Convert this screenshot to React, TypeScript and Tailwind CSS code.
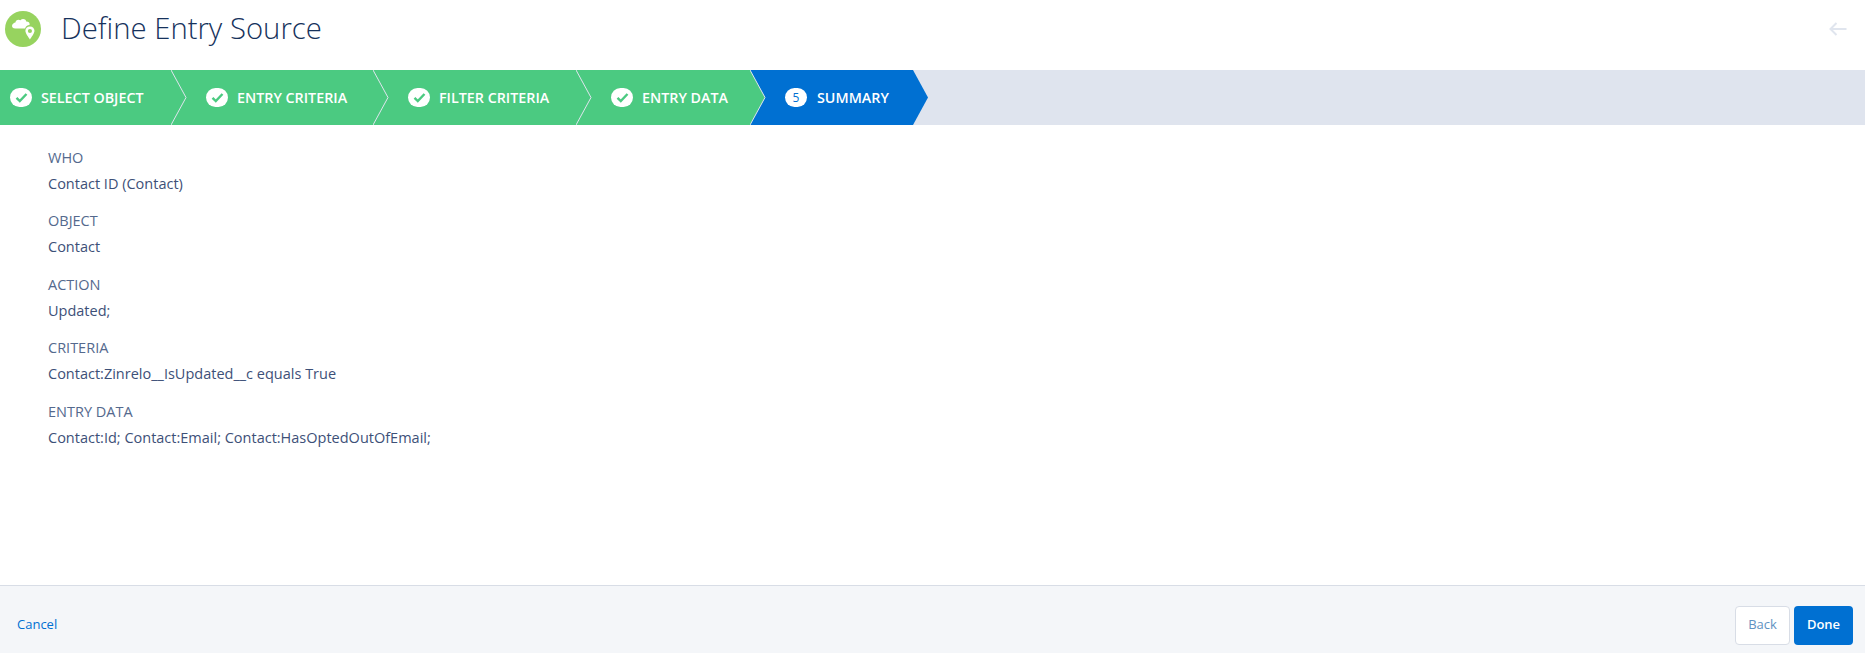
const font = '[font-family:"Open_Sans","Noto_Sans",sans-serif]';

const steps = [
  { label: 'SELECT OBJECT', width: 'w-[171px]', pad: 'pl-[10px]' },
  { label: 'ENTRY CRITERIA', width: 'w-[202px]', pad: 'pl-[35px]' },
  { label: 'FILTER CRITERIA', width: 'w-[203px]', pad: 'pl-[35px]' },
  { label: 'ENTRY DATA', width: 'w-[174px]', pad: 'pl-[35px]' },
];

const summary = [
  { label: 'WHO', value: 'Contact ID (Contact)' },
  { label: 'OBJECT', value: 'Contact' },
  { label: 'ACTION', value: 'Updated;' },
  { label: 'CRITERIA', value: 'Contact:Zinrelo__IsUpdated__c equals True' },
  { label: 'ENTRY DATA', value: 'Contact:Id; Contact:Email; Contact:HasOptedOutOfEmail;' },
];

function CheckBadge() {
  return (
    <span className="flex h-[19px] w-[22px] shrink-0 items-center justify-center rounded-full bg-white">
      <svg width="13" height="11" viewBox="0 0 13 11" fill="none">
        <path d="M1.5 5.8 L4.8 9 L11.5 2" stroke="#4bca81" strokeWidth="2.4" />
      </svg>
    </span>
  );
}

function Chevron() {
  return (
    <svg className="absolute left-full top-0 z-10" width="16" height="55" viewBox="0 0 16 55" fill="none">
      <path d="M0 0 L15 27.5 L0 55 Z" fill="#4bca81" />
      <path d="M0 0 L15 27.5 L0 55" stroke="#dfe4ee" strokeWidth="1" />
    </svg>
  );
}

export default function App() {
  return (
    <div className={`flex h-[653px] flex-col bg-white ${font}`}>
      <header className="flex h-[70px] items-center pb-[12px] pl-[5px] pr-[18px]">
        <span className="flex h-9 w-9 items-center justify-center rounded-full bg-[#97d35f]">
          <svg width="26" height="24" viewBox="0 0 24 22">
            <path
              d="M5 5 C5 2.6 8 1.6 9.6 3 C11.2 1.2 14.4 1.6 15 4 C17.4 4 18.6 5.6 18 7.4 C16 7.4 14.4 8.6 14 10.6 L5 10.6 C2.6 10.6 1.4 9 2 7.4 C2.4 6.2 3.6 5.2 5 5 Z"
              fill="#fff"
            />
            <path d="M18.4 8.6 C21 8.6 22.6 10.4 22.6 12.6 C22.6 15 19.8 18.4 18.4 20.6 C17 18.4 14.2 15 14.2 12.6 C14.2 10.4 15.8 8.6 18.4 8.6 Z" fill="#fff" />
            <circle cx="18.4" cy="12.8" r="1.9" fill="#97d35f" />
          </svg>
        </span>
        <h1 className="ml-[20px] text-[29.3px] font-light text-[#16325c]">Define Entry Source</h1>
        <svg className="ml-auto" width="18" height="14" viewBox="0 0 18 14" fill="none">
          <path d="M17.5 7 H2 M7.5 1 L1.5 7 L7.5 13" stroke="#e0e5ee" strokeWidth="2" />
        </svg>
      </header>

      <nav className="flex h-[55px] bg-[#dfe4ee] text-[14.3px] font-semibold text-white">
        {steps.map((step) => (
          <div key={step.label} className={`relative flex items-center gap-[9px] bg-[#4bca81] ${step.width} ${step.pad}`}>
            <CheckBadge />
            <span>{step.label}</span>
            <Chevron />
          </div>
        ))}
        <div className="flex w-[178px] items-center gap-[10px] bg-[#0070d2] pl-[35px] [clip-path:polygon(0_0,163px_0,178px_50%,163px_100%,0_100%)]">
          <span className="flex h-[19px] w-[22px] items-center justify-center rounded-full bg-white text-xs font-normal text-[#0070d2]">
            5
          </span>
          <span>SUMMARY</span>
        </div>
      </nav>

      <main className="flex flex-1 flex-col gap-[15.4px] pl-[48px] pt-[22px] text-[14.5px] leading-[22px]">
        {summary.map((row) => (
          <div key={row.label} className="flex flex-col gap-1">
            <div className="text-[#54698d]">{row.label}</div>
            <div className="text-[#3d5078]">{row.value}</div>
          </div>
        ))}
      </main>

      <footer className="flex h-[68px] items-center justify-between border-t border-[#d8dde6] bg-[#f4f6f9] pl-[17px] pr-[12px] pt-[11px] text-[13px]">
        <a className="text-[#0070d2]">Cancel</a>
        <div className="flex gap-[4px]">
          <button className="h-[39px] w-[55px] rounded border border-[#d8dde6] bg-white text-[#5f92c2]">Back</button>
          <button className="h-[39px] w-[59px] rounded bg-[#0070d2] font-semibold text-white">Done</button>
        </div>
      </footer>
    </div>
  );
}
